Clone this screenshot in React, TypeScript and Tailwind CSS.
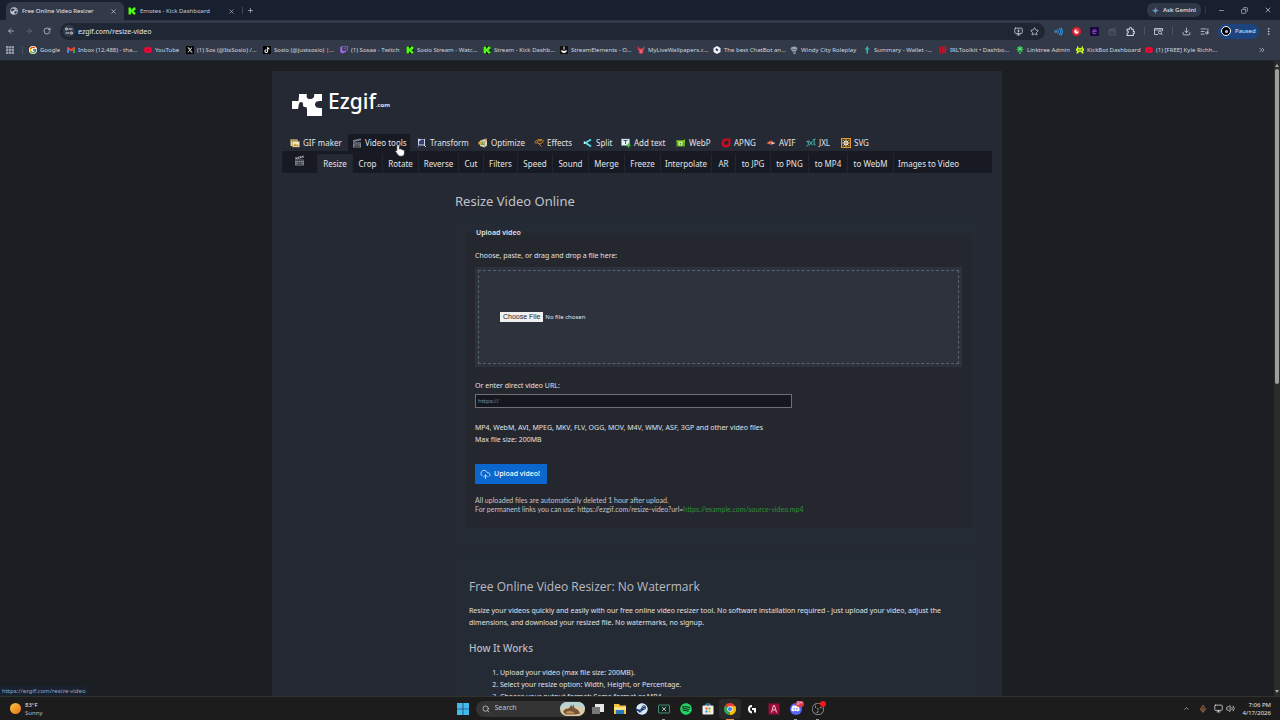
import type { ReactNode } from "react";
import {
  ArrowLeft,
  ArrowRight,
  ChevronUp,
  ChevronsRight,
  CloudUpload,
  Copy,
  Download,
  EllipsisVertical,
  ListMusic,
  Mic,
  Minus,
  MonitorDown,
  Monitor,
  Plus,
  RotateCw,
  Search,
  Star,
  Volume2,
  X,
} from "lucide-react";
import { FaDiscord, FaSpotify, FaSteam, FaTiktok, FaTwitch, FaXTwitter, FaYoutube } from "react-icons/fa6";
import { FcGoogle } from "react-icons/fc";
import { SiLinktree, SiObsstudio } from "react-icons/si";

interface Item {
  label: string;
  icon: ReactNode;
  width: string;
}

function KickIcon({ color = "#53fc18", bg = "#0c1a0a" }: { color?: string; bg?: string }) {
  return (
    <svg viewBox="0 0 16 16" className="size-full">
      <rect width="16" height="16" fill={bg} />
      <path d="M1 1h5v4h2V3h2V1h5v5h-2v2h-2v1h2v2h2v4h-5v-2H8v-2H6v4H1z" fill={color} />
    </svg>
  );
}

function GlobeIcon() {
  return (
    <svg viewBox="0 0 16 16" className="size-full">
      <circle cx="8" cy="8" r="7.5" fill="#c3c9d3" />
      <path d="M3 4c3-2 4 0 6 0s0 3-2 3-1 3-3 2-3-3-1-5zM9 9c2-1 4-1 5 0 0 3-3 5-5 5 1-2-1-4 0-5zM11 2l3 3-2 1z" fill="#323a49" />
    </svg>
  );
}

function GmailIcon() {
  return (
    <svg viewBox="0 0 16 12" className="size-full">
      <path d="M0 2v10h4V5z" fill="#4285f4" />
      <path d="M16 2v10h-4V5z" fill="#34a853" />
      <path d="M0 1.500C0 0 2-.5 3 .5L8 4l5-3.500c1-1 3-.5 3 1V4L8 9 0 4z" fill="#ea4335" />
    </svg>
  );
}

function ChromeIcon() {
  return (
    <svg viewBox="0 0 48 48" className="size-full">
      <path d="M24 24 3.200 12A24 24 0 0 1 44.800 12z" fill="#ea4335" />
      <path d="M24 24 44.800 12A24 24 0 0 1 24 48z" fill="#fbbc04" />
      <path d="M24 24 24 48A24 24 0 0 1 3.200 12z" fill="#34a853" />
      <path d="M24 13h20.800A24 24 0 0 1 24 48l9.500-18.500z" fill="#fbbc04" />
      <circle cx="24" cy="24" r="11" fill="#fff" />
      <circle cx="24" cy="24" r="8.500" fill="#4285f4" />
    </svg>
  );
}

function ClapperIcon() {
  return (
    <svg viewBox="0 0 20 20" className="size-full">
      <path d="M2 4.500 17 1l1 3.500L3 8z" fill="#a2a6ae" />
      <path d="m5 4 2 3M9 3l2 3M13 2l2 3" stroke="#20242d" strokeWidth="1.500" />
      <rect x="2" y="8" width="16" height="11" rx="1" fill="#80858e" />
      <path d="M3 10h14M5 8l-2 3M9 8l-2 3M13 8l-2 3M17 8l-2 3M4 14h12M4 17h12M8 12v6M12 12v6" stroke="#252933" strokeWidth="1.100" />
    </svg>
  );
}

const bookmarks: Item[] = [
  { label: "Google", width: "w-[38px]", icon: <FcGoogle className="size-full rounded-full bg-white" /> },
  { label: "Inbox (12,488) - tha...", width: "w-[77px]", icon: <GmailIcon /> },
  { label: "YouTube", width: "w-[42px]", icon: <FaYoutube className="size-full text-[#ff0033]" /> },
  { label: "(1) Sos (@ItsSosio) /...", width: "w-[77px]", icon: <FaXTwitter className="size-full bg-black p-px text-white" /> },
  { label: "Sosio (@justsosio) |...", width: "w-[77px]", icon: <FaTiktok className="size-full bg-black p-px text-white" /> },
  { label: "(1) Sosaa - Twitch", width: "w-[66px]", icon: <FaTwitch className="size-full text-[#a970ff]" /> },
  { label: "Sosio Stream - Watc...", width: "w-[77px]", icon: <KickIcon /> },
  { label: "Stream - Kick Dashb...", width: "w-[77px]", icon: <KickIcon /> },
  {
    label: "StreamElements - O...",
    width: "w-[77px]",
    icon: (
      <svg viewBox="0 0 16 16" className="size-full">
        <rect width="16" height="16" fill="#111" />
        <path d="M2 8c2 2 10 2 12 0 0 4-3 6-6 6s-6-2-6-6zM7 1h2v6H7z" fill="#f3f3f3" />
      </svg>
    ),
  },
  {
    label: "MyLiveWallpapers.c...",
    width: "w-[76px]",
    icon: (
      <svg viewBox="0 0 16 16" className="size-full">
        <path d="M2 0l3 5h6l3-5 1 6-3 3 1 5-5 2-5-2 1-5-3-3z" fill="#d83a49" />
        <path d="M5 8l2 1M11 8 9 9M6 12h4" stroke="#fff" />
      </svg>
    ),
  },
  {
    label: "The best ChatBot an...",
    width: "w-[77px]",
    icon: (
      <svg viewBox="0 0 16 16" className="size-full">
        <path d="M8 0l7 4v8l-7 4-7-4V4z" fill="#f4f4f8" />
        <path d="m6 4 5 4-3 3-3-4z" fill="#2c3350" />
      </svg>
    ),
  },
  {
    label: "Windy City Roleplay",
    width: "w-[73px]",
    icon: (
      <svg viewBox="0 0 16 16" className="size-full">
        <path d="M1 7c0-4 3-6 7-6s7 2 7 6z" fill="#93a4b8" />
        <path d="M3 9h10M5 12h7M7 15h4" stroke="#c5d0dc" strokeWidth="1.500" />
      </svg>
    ),
  },
  {
    label: "Summary - Wallet -...",
    width: "w-[76px]",
    icon: (
      <svg viewBox="0 0 16 16" className="size-full">
        <path d="M7 1h3v4h3v2h-3v8H7V7H4V5h3z" fill="#2fc3b0" />
      </svg>
    ),
  },
  {
    label: "IRLToolkit • Dashbo...",
    width: "w-[77px]",
    icon: (
      <svg viewBox="0 0 16 16" className="size-full">
        <path d="M1 1h3v14H1zM6 1h9v7h-3l3 7h-3l-3-6v6H6zM9 3v3h3V3z" fill="#c4162a" />
      </svg>
    ),
  },
  { label: "Linktree Admin", width: "w-[60px]", icon: <SiLinktree className="size-full text-[#43e660]" /> },
  {
    label: "KickBot Dashboard",
    width: "w-[69px]",
    icon: (
      <svg viewBox="0 0 16 16" className="size-full">
        <path d="M2 1h3v3h6V1h3v4h2v5h-2v2h1v3h-4v-3H5v3H1v-3h1v-2H0V5h2z" fill="#c5f51f" />
        <path d="M4 7h3v2H4zM9 7h3v2H9z" fill="#26303a" />
      </svg>
    ),
  },
  { label: "(1) [FREE] Kyle Richh...", width: "w-[77px]", icon: <FaYoutube className="size-full text-[#ff0033]" /> },
];

const menu: Item[] = [
  {
    label: "GIF maker",
    width: "w-[62px]",
    icon: (
      <svg viewBox="0 0 20 20" className="size-full">
        <rect x="1" y="2" width="15" height="14" fill="#e9d58a" />
        <path d="M1 2h15v3H1z" fill="#71603a" />
        <path d="M3 3h2M7 3h2M11 3h2" stroke="#f4e9b6" />
        <rect x="5" y="7" width="14" height="11" fill="#efe6c4" stroke="#a58a43" />
        <path d="m6 16 4-5 3 3 2-2 3 4z" fill="#c6973b" />
      </svg>
    ),
  },
  { label: "Video tools", width: "mr-[3px] w-[62px]", icon: <ClapperIcon /> },
  {
    label: "Transform",
    width: "w-[61px]",
    icon: (
      <svg viewBox="0 0 20 20" className="size-full">
        <path d="M2 2h14v13H2z" fill="#c9d2ef" />
        <path d="M4 13V7l5-4h5v10z" fill="#33416f" />
        <path d="m14 14 4 4" stroke="#d6def8" strokeWidth="2" />
        <path d="M1 1h2M1 18h3M17 1h1" stroke="#6987db" strokeWidth="1.500" />
      </svg>
    ),
  },
  {
    label: "Optimize",
    width: "w-[56px]",
    icon: (
      <svg viewBox="0 0 20 20" className="size-full">
        <path d="M4 5 14 2l4 2v11l-5 4-9-3z" fill="#d8d5be" />
        <path d="m4 5 9 3v11M13 8l5-4" stroke="#8c7650" fill="none" />
        <path d="M1 7h7v6H1z" fill="#dca849" />
        <path d="m5 14 4-7 4 7z" fill="#68ab43" />
        <path d="M13 1h5v5z" fill="#b98244" />
      </svg>
    ),
  },
  {
    label: "Effects",
    width: "w-[49px]",
    icon: (
      <svg viewBox="0 0 20 20" className="size-full" fill="none">
        <path d="M1 9c3-6 15-8 17-4s-6 8-10 5 2-6 6-4M9 11l6 6" stroke="#d48122" strokeWidth="2" />
        <path d="M2 10h6M11 4l5 1" stroke="#f3d04c" />
      </svg>
    ),
  },
  {
    label: "Split",
    width: "w-[38px]",
    icon: (
      <svg viewBox="0 0 20 20" className="size-full" fill="none">
        <path d="M16 3 5 9.500 16 17" stroke="#5be0ee" strokeWidth="3.500" />
        <path d="M3 7v5" stroke="#c8f7fc" strokeWidth="3" />
      </svg>
    ),
  },
  {
    label: "Add text",
    width: "w-[55px]",
    icon: (
      <svg viewBox="0 0 20 20" className="size-full">
        <rect x="1" y="2" width="16" height="13" fill="#e6f3f5" stroke="#7da0b4" />
        <path d="M5 5h8M9 5v7" stroke="#345b78" strokeWidth="2" />
        <path d="M15 11v8M11 15h8" stroke="#4aba3f" strokeWidth="3" />
      </svg>
    ),
  },
  {
    label: "WebP",
    width: "w-[45px]",
    icon: (
      <svg viewBox="0 0 20 20" className="size-full">
        <path d="M1 5h13l4-3v15H1z" fill="#5eae12" />
        <path d="M1 5h17v3H1z" fill="#8ad229" />
        <rect x="5" y="8" width="8" height="7" rx="2" fill="#eef7db" />
        <circle cx="9" cy="11.500" r="2" fill="#4d9511" />
      </svg>
    ),
  },
  {
    label: "APNG",
    width: "w-[45px]",
    icon: (
      <svg viewBox="0 0 20 20" className="size-full">
        <path d="M6 1h13v11c0 4-4 7-9 7-5 0-9-3-9-8 0-4 2-7 5-10z" fill="#c70d20" />
        <path d="M14 6c-4-2-8 0-8 4s4 5 7 3 2-4 1-7z" fill="#2c2230" />
      </svg>
    ),
  },
  {
    label: "AVIF",
    width: "w-[40px]",
    icon: (
      <svg viewBox="0 0 20 20" className="size-full">
        <path d="m1 10 7-4 2 4-2 3z" fill="#ef7b27" />
        <path d="m9 4 5 3-3 5-3-3z" fill="#e44761" />
        <path d="m12 8 7 2-7 3-3-3z" fill="#f0d7a9" />
        <path d="m7 12 4-2 2 5z" fill="#8d4bc2" />
      </svg>
    ),
  },
  {
    label: "JXL",
    width: "w-[35px]",
    icon: (
      <svg viewBox="0 0 22 20" className="size-full" fill="none" stroke="#49b7ae" strokeWidth="2.200">
        <path d="M5 4v9c0 3-2 4-4 4M5 7H1M7 6l8 9M15 5l-8 10M18 2v12h3M15 3l6-2" />
      </svg>
    ),
  },
  {
    label: "SVG",
    width: "w-[40px]",
    icon: (
      <svg viewBox="0 0 20 20" className="size-full">
        <rect x="1" y="1" width="18" height="18" fill="#5b4520" stroke="#e39a2d" strokeWidth="2" />
        <path d="M10 3v14M3 10h14M5 5l10 10M15 5 5 15" stroke="#f2ead6" strokeWidth="2" />
        <circle cx="10" cy="10" r="3.500" fill="#f2ead6" />
        <circle cx="10" cy="10" r="1.500" fill="#4b3a1e" />
      </svg>
    ),
  },
];

const submenu = [
  { label: "Resize", width: "w-[35px]" },
  { label: "Crop", width: "w-[30px]" },
  { label: "Rotate", width: "w-[36px]" },
  { label: "Reverse", width: "w-[40px]" },
  { label: "Cut", width: "w-[25px]" },
  { label: "Filters", width: "w-[34px]" },
  { label: "Speed", width: "w-[35px]" },
  { label: "Sound", width: "w-[36px]" },
  { label: "Merge", width: "w-[36px]" },
  { label: "Freeze", width: "w-[36px]" },
  { label: "Interpolate", width: "w-[51px]" },
  { label: "AR", width: "w-[24px]" },
  { label: "to JPG", width: "w-[35px]" },
  { label: "to PNG", width: "w-[38px]" },
  { label: "to MP4", width: "w-[39px]" },
  { label: "to WebM", width: "w-[46px]" },
  { label: "Images to Video", width: "w-[70px]" },
];

function BrowserTab({ title, icon, active }: { title: string; icon: ReactNode; active?: boolean }) {
  return (
    <div
      className={`flex h-[18px] w-[118px] items-center gap-1 rounded-t-md px-1 text-[6px] ${
        active ? "bg-[#323a49] text-[#e6e9ef]" : "text-[#c6ccd6]"
      }`}
    >
      <span className="size-2 shrink-0">{icon}</span>
      <span className="flex-1 whitespace-nowrap">{title}</span>
      <button aria-label="Close tab" className="mr-[3px]">
        <X className="size-[7px]" />
      </button>
    </div>
  );
}

function TabStrip() {
  return (
    <div className="flex h-5 items-end bg-[#18202f] pl-[6px] text-[#d5dae3]">
      <BrowserTab active title="Free Online Video Resizer" icon={<GlobeIcon />} />
      <BrowserTab title="Emotes - Kick Dashboard" icon={<KickIcon />} />
      <div className="flex h-5 flex-1 items-center">
        <span className="h-[7px] w-px bg-[#3c4657]" />
        <button aria-label="New tab" className="ml-1">
          <Plus className="size-[7px]" />
        </button>
      </div>
      <div className="flex h-5 items-center">
        <button className="flex h-[14px] w-[54px] items-center justify-center gap-1 rounded-md bg-[#2f3847] text-[6px] font-semibold">
          <svg viewBox="0 0 16 16" className="size-[7px]">
            <path d="M8 0c1 5 3 7 8 8-5 1-7 3-8 8-1-5-3-7-8-8 5-1 7-3 8-8z" fill="#4b93f7" />
            <path d="M8 0c1 5 3 7 8 8H8z" fill="#e8574f" />
            <path d="M0 8h8v8c-1-5-3-7-8-8z" fill="#4fc07a" />
          </svg>
          Ask Gemini
        </button>
        <span className="ml-1 h-2 w-px bg-[#2e3746]" />
        <button aria-label="Minimize" className="ml-3">
          <Minus className="size-[7px]" />
        </button>
        <button aria-label="Restore" className="ml-4">
          <Copy className="size-[7px] -scale-x-100" />
        </button>
        <button aria-label="Close window" className="ml-4 mr-2">
          <X className="size-2" />
        </button>
      </div>
    </div>
  );
}

function Toolbar() {
  return (
    <div className="flex h-[21px] items-center bg-[#323a49] pt-px text-[#d5dae3]">
      <div className="flex w-[60px] items-center gap-[10px] pl-[7px]">
        <button aria-label="Back">
          <ArrowLeft className="size-2" />
        </button>
        <button aria-label="Forward" className="text-[#707989]">
          <ArrowRight className="size-2" />
        </button>
        <button aria-label="Reload">
          <RotateCw className="size-2" />
        </button>
      </div>
      <div className="flex h-[17px] flex-1 items-center rounded-full bg-[#1f2735] pr-[6px]">
        <span className="ml-[3px] flex size-3 items-center justify-center rounded-full bg-[#323a49]">
          <svg viewBox="0 0 16 16" className="size-2" fill="none" stroke="#d5dae3" strokeWidth="2">
            <path d="M7 4h8M1 12h8" />
            <circle cx="3" cy="4" r="2" />
            <circle cx="13" cy="12" r="2" />
          </svg>
        </span>
        <input
          aria-label="Address"
          defaultValue="ezgif.com/resize-video"
          className="ml-[3px] h-3 flex-1 bg-transparent text-[7px] text-[#e4e8ee] outline-none"
        />
        <button aria-label="Install app">
          <MonitorDown className="size-[9px]" />
        </button>
        <button aria-label="Bookmark" className="ml-[7px]">
          <Star className="size-[9px]" />
        </button>
      </div>
      <div className="flex shrink-0 items-center gap-[9px] pl-[9px] pr-[7px]">
        <svg viewBox="0 0 16 16" className="size-[9px]" fill="none" stroke="#3498e6" strokeWidth="1.800">
          <circle cx="3" cy="8" r="1.500" />
          <path d="M6 4c2 2 2 6 0 8M9 2c4 3 4 9 0 12M12 1c4 4 4 10 0 14" />
        </svg>
        <svg viewBox="0 0 16 16" className="size-[9px]">
          <circle cx="8" cy="8" r="8" fill="#dc1f2e" />
          <circle cx="8" cy="8" r="4" fill="#fff" />
          <path d="M8 8V4a4 4 0 0 1 4 4z" fill="#dc1f2e" />
        </svg>
        <svg viewBox="0 0 16 16" className="size-[9px]">
          <rect width="16" height="16" fill="#1c0b38" />
          <path d="M11 11c-2 2-6 1-6-3s6-4 6 0H6" fill="none" stroke="#7b3fc9" strokeWidth="2" />
        </svg>
        <svg viewBox="0 0 16 16" className="size-[9px]" fill="none" stroke="#586272" strokeWidth="1.500">
          <path d="M2 6h11v8H2zM2 5l11-3M6 9h4" />
        </svg>
        <svg viewBox="0 0 16 16" className="size-[9px]" fill="none" stroke="#d5dae3" strokeWidth="1.800">
          <path d="M2 4h4c-1-4 5-4 4 0h3v4c4-1 4 4 0 3v4H2v-4c3 0 3-4 0-4z" />
        </svg>
        <span className="h-2 w-px bg-[#4b5566]" />
        <svg viewBox="0 0 18 16" className="size-[9px]" fill="none" stroke="#d5dae3" strokeWidth="1.600">
          <path d="M8 14H1V2h16v5M1 5h16" />
          <circle cx="12" cy="10" r="3" />
          <path d="m14 12 3 3" />
        </svg>
        <span className="h-2 w-px bg-[#4b5566]" />
        <Download className="size-[9px]" />
        <ListMusic className="size-[9px]" />
        <button className="flex h-[15px] w-[41px] items-center gap-1 rounded-full bg-[#1d4480] pl-[3px] text-[6px] text-[#dce8fb]">
          <span className="flex size-[10px] items-center justify-center rounded-full border border-white bg-black">
            <span className="size-[3px] rounded-full bg-[#b8c8ff]" />
          </span>
          Paused
        </button>
        <button aria-label="Browser menu" className="-ml-1">
          <EllipsisVertical className="size-[9px]" />
        </button>
      </div>
    </div>
  );
}

function BookmarksBar() {
  return (
    <nav className="flex h-[20px] items-center border-b border-[#20262f] bg-[#323a49] pb-px text-[6px] text-[#d0d5de]">
      <svg viewBox="0 0 16 16" className="ml-[6px] size-[8px] shrink-0" fill="none" stroke="#b5bcc8" strokeWidth="1.600">
        <path d="M1 1h3v3H1zM6.500 1h3v3h-3zM12 1h3v3h-3zM1 6.500h3v3H1zM6.500 6.500h3v3h-3zM12 6.500h3v3h-3zM1 12h3v3H1zM6.500 12h3v3h-3zM12 12h3v3h-3z" />
      </svg>
      <span className="ml-2 mr-[6px] h-2 w-px shrink-0 bg-[#485263]" />
      {bookmarks.map((b) => (
        <a key={b.label} href="#" className={`flex shrink-0 items-center gap-[3px] ${b.width}`}>
          <span className="size-2 shrink-0">{b.icon}</span>
          <span className="whitespace-nowrap">{b.label}</span>
        </a>
      ))}
      <button aria-label="More bookmarks" className="ml-auto mr-[14px]">
        <ChevronsRight className="size-[8px]" />
      </button>
    </nav>
  );
}

function Logo() {
  return (
    <a href="#" className="flex h-6 items-start text-white">
      <svg viewBox="0 0 30 22" className="mt-[3px] h-[22px] w-[30px]" fill="#fff">
        <path d="M0 7h5c3 0 1-2 2-4V0h8c-1 3 0 5 3 5s5-2 4-5h8v7h-2c-3 0-5 1-5 3.500S25 14 28 14h2v8H15v-6c0-2 0-3-2-3s-2-1-2-3-3-3-4 0 0 5-2 5H0z" />
      </svg>
      <span className="ml-[6px] text-[21px] leading-[20px] font-medium">Ezgif</span>
      <span className="mt-2 text-[6px] leading-3 font-semibold">.com</span>
    </a>
  );
}

function HandCursor() {
  return (
    <svg viewBox="0 0 16 20" className="absolute right-[5px] top-[10px] z-10 h-[13px] w-[10px]">
      <path
        d="M5 1c1.500 0 2 1 2 2v5l1-1c1 0 2 .5 2 1.500 1-.8 2.500 0 2.500 1 1-.5 2.500 0 2.500 1.500v3c0 3-1.500 5-4 5H8c-2 0-3-1.500-4-3l-3-4c-1-1.500 1-2.500 2-1.500V3c0-1 .5-2 2-2z"
        fill="#fff"
        stroke="#222"
      />
    </svg>
  );
}

function SiteNav() {
  return (
    <nav className="mt-[19px]">
      <div className="flex h-[17px] pl-1 text-[8px] text-[#e3e4e8]">
        {menu.map((m) => (
          <a
            key={m.label}
            href="#"
            className={`relative flex shrink-0 items-center gap-[3px] whitespace-nowrap pl-1 ${m.width} ${
              m.label === "Video tools" ? "bg-[#171a22]" : ""
            }`}
          >
            <span className="size-[10px] shrink-0">{m.icon}</span>
            {m.label}
            {m.label === "Video tools" && <HandCursor />}
          </a>
        ))}
      </div>
      <div className="flex h-[22px] items-end bg-[#171a22] text-[8px] text-[#e3e4e8]">
        <a href="#" aria-label="Video tools" className="flex h-full w-[35px] shrink-0 items-center justify-center">
          <span className="mb-1 size-[11px]">
            <ClapperIcon />
          </span>
        </a>
        {submenu.map((s) => (
          <a
            key={s.label}
            href="#"
            className={`flex h-[19px] shrink-0 items-center justify-center whitespace-nowrap border-l border-[#222630] ${s.width} ${
              s.label === "Resize" ? "bg-[#252933]" : ""
            }`}
          >
            {s.label}
          </a>
        ))}
      </div>
    </nav>
  );
}

function UploadForm() {
  return (
    <form className="mt-[9px] bg-[#252b35] px-[10px] pb-4 pt-[9px] leading-3">
      <fieldset className="bg-[#25272f] px-[10px] pb-[14px]">
        <legend className="px-px font-semibold">Upload video</legend>
        <label htmlFor="file" className="mt-[11px] block">
          Choose, paste, or drag and drop a file here:
        </label>
        <div className="mt-[5px] border border-[#2b343e] bg-[#2d323d] p-[2px]">
          <div className="flex h-[94px] items-center border border-dashed border-[#56656b] px-[21px]">
            <input
              id="file"
              type="file"
              className="w-full text-[6px] file:mr-[2px] file:h-[10px] file:bg-[#f0f0f0] file:px-[3px] file:font-['Liberation_Sans',sans-serif] file:text-[7px] file:leading-[10px] file:text-[#222]"
            />
          </div>
        </div>
        <label htmlFor="url" className="mt-[13px] block">
          Or enter direct video URL:
        </label>
        <input
          id="url"
          type="text"
          placeholder="https://"
          className="mt-[2px] block h-[14px] w-[317px] border border-[#6d7078] bg-[#14171d] px-[2px] text-[6px] placeholder:text-[#85888f]"
        />
        <p className="mt-[14px]">
          MP4, WebM, AVI, MPEG, MKV, FLV, OGG, MOV, M4V, WMV, ASF, 3GP and other video files
          <br />
          Max file size: 200MB
        </p>
        <button className="mt-[18px] flex h-5 w-[72px] items-center gap-[3px] rounded-[1px] bg-[#0b66cd] px-[5px] font-medium text-white">
          <CloudUpload className="size-[11px]" strokeWidth={1.5} />
          Upload video!
        </button>
        <p className="mt-3 font-['Lato',sans-serif] text-[7px] leading-[9px] text-[#c3c5ca]">
          All uploaded files are automatically deleted 1 hour after upload.
          <br />
          For permanent links you can use: https://ezgif.com/resize-video?url=
          <span className="text-[#2f8f35]">https://example.com/source-video.mp4</span>
        </p>
      </fieldset>
    </form>
  );
}

function Description() {
  return (
    <section className="mt-[10px] bg-[#252b35] px-[14px] pt-[25px]">
      <h2 className="font-['Open_Sans',sans-serif] text-[12px] leading-4 font-medium text-[#b9bcc3]">
        Free Online Video Resizer: No Watermark
      </h2>
      <p className="mt-[10px] leading-3">
        Resize your videos quickly and easily with our free online video resizer tool. No software installation
        required - just upload your video, adjust the dimensions, and download your resized file. No watermarks, no
        signup.
      </p>
      <h3 className="mt-[11px] text-[10px] leading-4 font-medium text-[#b9bcc3]">How It Works</h3>
      <ol className="mt-[11px] list-decimal pl-[31px] leading-3">
        <li>Upload your video (max file size: 200MB).</li>
        <li>Select your resize option: Width, Height, or Percentage.</li>
        <li>Choose your output format: Same format or MP4.</li>
      </ol>
    </section>
  );
}

function Scrollbar() {
  return (
    <div className="flex w-[6px] shrink-0 flex-col items-center bg-[#2a2c2b] py-[3px]">
      <svg viewBox="0 0 8 6" className="h-[3px] w-1" fill="#a8a8a8">
        <path d="M4 0l4 6H0z" />
      </svg>
      <div className="mt-[2px] h-1/2 w-1 rounded-full bg-[#9d9f9e]" />
      <svg viewBox="0 0 8 6" className="mt-auto h-[3px] w-1" fill="#a8a8a8">
        <path d="M4 6l4-6H0z" />
      </svg>
    </div>
  );
}

function TaskIcon({ children, label, state }: { children: ReactNode; label: string; state?: "open" | "active" }) {
  return (
    <button
      aria-label={label}
      className={`relative flex h-5 w-[22px] items-center justify-center rounded-sm ${
        state === "active" ? "bg-[#2a2a2a]" : ""
      }`}
    >
      <span className="size-3">{children}</span>
      {state && (
        <span
          className={`absolute -bottom-px h-px ${state === "active" ? "w-2 bg-[#e08a4c]" : "w-[3px] bg-[#9a9a9a]"}`}
        />
      )}
    </button>
  );
}

function Taskbar() {
  return (
    <footer className="grid h-6 shrink-0 grid-cols-[1fr_auto_1fr] items-center border-t border-[#303230] bg-[#1c1c1c] text-[6px] text-[#e4e4e4]">
      <div className="flex items-center gap-1 pl-[10px] leading-2">
        <span className="size-[11px] rounded-full bg-linear-to-br from-[#ffc540] to-[#e56f14]" />
        <p>
          83°F
          <br />
          <span className="text-[#b9b9b9]">Sunny</span>
        </p>
      </div>
      <div className="flex items-center">
        <TaskIcon label="Start">
          <svg viewBox="0 0 12 12" className="size-full" fill="#43b9ef">
            <path d="M0 0h5.700v5.700H0zM6.300 0H12v5.700H6.300zM0 6.300h5.700V12H0zM6.300 6.300H12V12H6.300z" />
          </svg>
        </TaskIcon>
        <label className="mx-[2px] flex h-4 w-[109px] items-center gap-[5px] rounded-full bg-[#333433] pl-[6px]">
          <Search className="size-2" />
          <input
            aria-label="Search"
            placeholder="Search"
            className="w-0 flex-1 bg-transparent text-[7px] outline-none placeholder:text-[#c4c4c4]"
          />
          <svg viewBox="0 0 50 28" className="h-[14px] w-[25px]">
            <rect width="50" height="28" rx="14" fill="#d9cda9" />
            <path d="M0 14C0 5 8 0 14 0h22c8 0 14 6 14 14-8-5-12-8-20-5S8 8 0 14z" fill="#b7d5d7" />
            <path d="M6 20c4-9 11-5 14-10l2-5 3 5 2-6 2 8c4 2 9 4 11 11l-8 2H12z" fill="#7a5535" />
            <path d="M12 20c6-4 14-2 18 3H13z" fill="#c4935b" />
          </svg>
        </label>
        <TaskIcon label="Task view">
          <svg viewBox="0 0 12 12" className="size-full">
            <path d="M3 1h9v8H3z" fill="#e6e6e6" />
            <path d="M0 4h8v7H0z" fill="#777" />
          </svg>
        </TaskIcon>
        <TaskIcon label="File Explorer">
          <svg viewBox="0 0 12 12" className="size-full">
            <path d="M0 1h5l1 1.500h6V11H0z" fill="#f7c53b" />
            <path d="M0 4h12v3H0z" fill="#ffe08a" />
            <path d="M2 7h8v4H2z" fill="#2779bd" />
          </svg>
        </TaskIcon>
        <TaskIcon label="Steam">
          <FaSteam className="size-full rounded-full bg-[#153a6a] text-[#d9e8f7]" />
        </TaskIcon>
        <TaskIcon label="Remote desktop" state="open">
          <svg viewBox="0 0 24 24" className="size-full" fill="none" stroke="#4c8a78" strokeWidth="2">
            <rect x="1" y="4" width="22" height="16" rx="1" fill="#14241f" />
            <path d="m8 8 8 8M16 8l-8 8" stroke="#a8c4ba" />
          </svg>
        </TaskIcon>
        <TaskIcon label="Spotify">
          <FaSpotify className="size-full text-[#1ed760]" />
        </TaskIcon>
        <TaskIcon label="Microsoft Store">
          <svg viewBox="0 0 24 24" className="size-full">
            <path d="M8 6V2h8v4" fill="none" stroke="#4ba6dc" strokeWidth="2" />
            <rect x="1" y="5" width="22" height="18" rx="2" fill="#eee" />
            <path d="M7 9h4v4H7z" fill="#f25022" />
            <path d="M13 9h4v4h-4z" fill="#7fba00" />
            <path d="M7 15h4v4H7z" fill="#00a4ef" />
            <path d="M13 15h4v4h-4z" fill="#ffb900" />
          </svg>
        </TaskIcon>
        <TaskIcon label="Chrome" state="active">
          <ChromeIcon />
        </TaskIcon>
        <TaskIcon label="Logitech G HUB">
          <svg viewBox="0 0 24 24" className="size-full" fill="none" stroke="#fff" strokeWidth="4">
            <path d="M12 6c-8 0-8 12 0 13M12 12h6v7" />
          </svg>
        </TaskIcon>
        <TaskIcon label="Aim trainer">
          <svg viewBox="0 0 24 24" className="size-full">
            <rect x="1" y="1" width="22" height="22" fill="#9c0c3b" />
            <path d="M7 19 11 5h2l4 14M12 12v4" fill="none" stroke="#f3cdd8" strokeWidth="2" />
          </svg>
        </TaskIcon>
        <TaskIcon label="Discord" state="open">
          <span className="relative flex size-3 items-center justify-center rounded-full bg-[#5865f2]">
            <FaDiscord className="size-[9px] text-white" />
            <span className="absolute -right-[2px] -top-[2px] flex h-[6px] items-center rounded-full bg-[#dd3b45] px-px text-[5px] leading-none">
              9+
            </span>
          </span>
        </TaskIcon>
        <TaskIcon label="OBS Studio" state="open">
          <span className="relative block size-3">
            <SiObsstudio className="size-full text-[#b9b9b9]" />
            <span className="absolute -right-[2px] -top-[2px] size-[6px] rounded-full bg-[#f01818]" />
          </span>
        </TaskIcon>
      </div>
      <div className="flex items-center justify-end pr-[9px] leading-2">
        <ChevronUp className="size-[7px]" />
        <Mic className="ml-[9px] size-2 text-[#cf8a57]" />
        <Monitor className="ml-[7px] size-[9px]" />
        <Volume2 className="ml-[3px] size-[9px]" />
        <p className="ml-2 text-right">
          7:06 PM
          <br />
          4/17/2026
        </p>
      </div>
    </footer>
  );
}

export default function App() {
  return (
    <div className="flex h-screen flex-col overflow-hidden bg-[#1b1e23] font-['Noto_Sans',sans-serif]">
      <header className="shrink-0">
        <TabStrip />
        <Toolbar />
        <BookmarksBar />
      </header>
      <div className="relative flex min-h-0 flex-1">
        <main className="flex-1 overflow-hidden pt-[10px] text-[7px] text-[#e0e1e5]">
          <div className="mx-auto min-h-full w-full max-w-[730px] bg-[#252933] px-[10px] pt-5">
            <div className="pl-[10px]">
              <Logo />
            </div>
            <SiteNav />
            <div className="ml-[173px] mr-[10px] mt-5">
              <h1 className="text-[13px] leading-4 text-[#c0c3c9]">Resize Video Online</h1>
              <UploadForm />
              <Description />
            </div>
          </div>
        </main>
        <Scrollbar />
        <div className="absolute bottom-0 left-0 rounded-tr-sm bg-[#1a2230] px-[2px] text-[6px] leading-[10px] text-[#9aa6ba]">
          https://ezgif.com/resize-video
        </div>
      </div>
      <Taskbar />
    </div>
  );
}
